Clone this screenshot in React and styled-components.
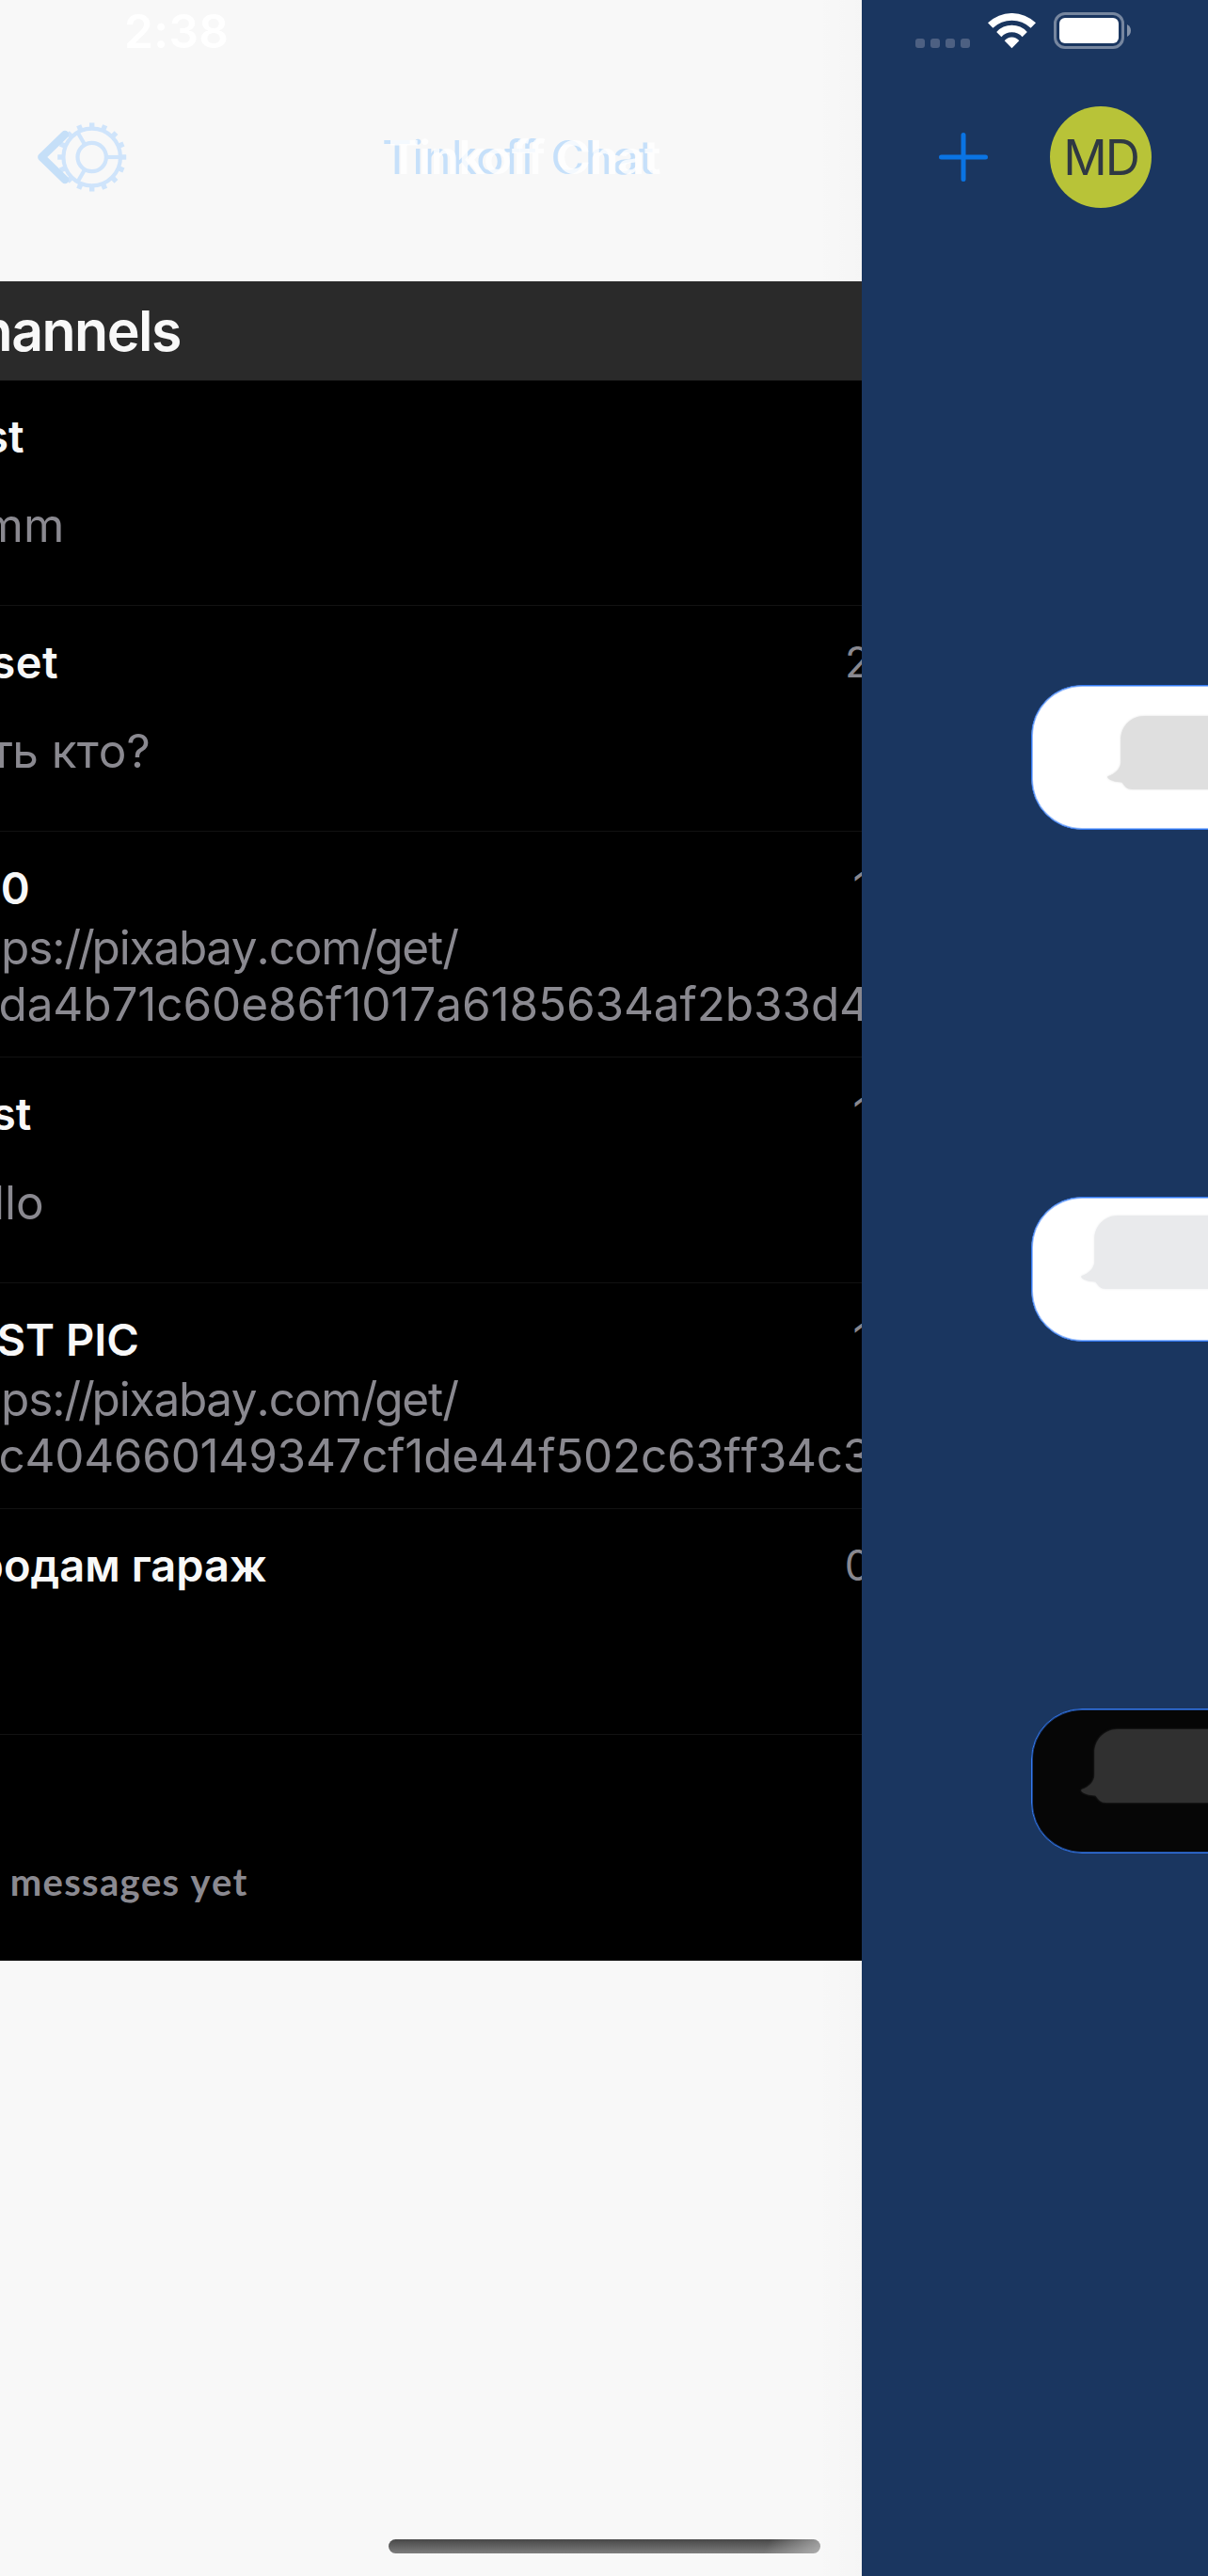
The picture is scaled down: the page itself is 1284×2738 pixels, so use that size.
import React from "react";
import styled, { createGlobalStyle } from "styled-components";

const GlobalStyle = createGlobalStyle`
  html, body { margin: 0; padding: 0; background: #1a3660; }
  * { box-sizing: border-box; }
`;

const Screen = styled.div`
  display: flex;
  width: 1284px;
  height: 2738px;
  overflow: hidden;
  background: #1a3660;
  font-family: Inter, "Liberation Sans", sans-serif;
`;

/* ---------- channels screen (sliding away) ---------- */

const ChannelsPane = styled.div`
  position: relative;
  display: flex;
  flex-direction: column;
  flex: none;
  width: 916px;
  height: 100%;
  overflow: hidden;
  background: #f8f8f8;
  white-space: nowrap;

  &::after {
    content: "";
    position: absolute;
    inset: 0 0 0 auto;
    width: 50px;
    background: linear-gradient(to right, rgba(0, 0, 0, 0), rgba(0, 0, 0, 0.012));
    pointer-events: none;
  }
`;

const Clock = styled.div`
  flex: none;
  height: 66px;
  padding-left: 132px;
  font-size: 49.5px;
  line-height: 66px;
  font-weight: 600;
  letter-spacing: 0.39px;
  color: #fff;
`;

const NavBar = styled.div`
  display: flex;
  flex: none;
  align-items: center;
  height: 202px;
  margin-bottom: 31px;
`;

const NavIcons = styled.svg`
  flex: none;
  width: 110px;
  height: 80px;
  margin-left: 30px;
`;

const TitleStack = styled.div`
  display: grid;
  margin-left: 266px;
`;

const NavTitle = styled.span`
  grid-area: 1 / 1;
  padding-left: ${(p) => p.$shift || 0}px;
  font-size: 49.5px;
  line-height: 202px;
  font-weight: ${(p) => p.$weight};
  letter-spacing: ${(p) => p.$track}px;
  color: ${(p) => p.$color};
`;

const SectionHeader = styled.div`
  flex: none;
  height: 105px;
  background: #2a2a2a;
  color: #f8f8f8;
  font-size: 59px;
  line-height: 105px;
  font-weight: 600;
  letter-spacing: -1.5px;
  text-indent: -22.5px;
`;

const List = styled.div`
  flex: none;
  background: #000;
  box-shadow: inset 0 1px 0 #121212;
`;

const Row = styled.div`
  height: 240px;
  padding-top: 30px;
  border-bottom: 1px solid #121212;
  overflow: hidden;

  &:last-child { border-bottom-color: #000; }
`;

const RowHead = styled.div`
  display: flex;
  height: 63px;
`;

const Name = styled.span`
  margin-left: ${(p) => p.$x}px;
  font-size: 47px;
  line-height: 60px;
  font-weight: 600;
  letter-spacing: ${(p) => p.$track || 0}px;
  color: #f8f8f8;
`;

const Time = styled.span`
  flex: none;
  width: ${(p) => p.$w}px;
  margin-left: auto;
  font-size: 44.5px;
  line-height: 60px;
  color: #8a8990;
`;

const Preview = styled.div`
  display: flex;
  flex-direction: column;
  justify-content: center;
  height: 120px;
`;

const Line = styled.span`
  margin-left: ${(p) => p.$x}px;
  font-size: 49.5px;
  line-height: 60px;
  letter-spacing: ${(p) => p.$track || 0}px;
  font-kerning: none;
  font-variant-ligatures: none;
  color: #8a8990;

  &:only-child { padding-top: 2px; }
`;

const Slash = styled.span`
  letter-spacing: -3.2px;
`;

const EmptyLine = styled(Line)`
  font-family: Lato, sans-serif;
  font-size: 40px;
  font-weight: 700;

  &:only-child { padding-top: 5px; }
`;

const HomeBar = styled.div`
  flex: none;
  width: 459px;
  height: 15px;
  margin: auto 0 24px 413px;
  border-radius: 8px;
  background:
    linear-gradient(115deg, rgba(190, 190, 190, 0) 87%, rgba(190, 190, 190, 0.75) 100%),
    linear-gradient(#474747, #7d7d7d);
`;

/* ---------- themes screen (underneath) ---------- */

const ThemesPane = styled.div`
  display: flex;
  flex-direction: column;
  flex: none;
  width: 368px;
  overflow: hidden;
`;

const StatusIcons = styled.div`
  display: flex;
  align-items: flex-end;
  height: 66px;
  padding: 0 0 14px 57px;
`;

const Dots = styled.div`
  display: flex;
  gap: 6px;
  margin: 0 19px 1px 0;
`;

const Dot = styled.i`
  width: 10px;
  height: 10px;
  border-radius: 3px;
  background: #4d6082;
`;

const Wifi = styled.svg`
  width: 51px;
  height: 38px;
  margin-right: 19px;
`;

const Battery = styled.svg`
  width: 84px;
  height: 39px;
`;

const Actions = styled.div`
  display: flex;
  align-items: center;
  height: 202px;
  padding-left: 82px;
  gap: 66px;
`;

const Plus = styled.svg`
  width: 52px;
  height: 52px;
`;

const Avatar = styled.div`
  display: flex;
  align-items: center;
  justify-content: center;
  width: 108px;
  height: 108px;
  border-radius: 50%;
  background: #b8c338;
  color: #2f3843;
  font-size: 51.5px;
  letter-spacing: -2px;
`;

const ThemeList = styled.div`
  display: flex;
  flex-direction: column;
  gap: 390px;
  padding: 460px 0 0 180px;
`;

const ThemeCard = styled.div`
  width: 260px;
  height: 154px;
  padding: ${(p) => p.$top}px 0 0 ${(p) => p.$left}px;
  border: 1px solid #347bf5;
  border-radius: 54px;
  background: ${(p) => p.$bg};
  box-shadow: inset 0 0 0 1px rgba(52, 123, 245, 0.5);
  overflow: hidden;
`;

const Bubble = styled.svg`
  display: block;
  width: 200px;
  height: 82px;
  overflow: visible;
  fill: ${(p) => p.$fill};
  filter: drop-shadow(0 0 1.2px ${(p) => p.$fill});
`;

const channels = [
  { name: "st", x: -16.8, lines: [{ t: "mm", x: -18.4 }] },
  { name: "set", x: -9.6, track: 0.5, time: "2", w: 18, lines: [{ t: "ть кто?", x: -9.8 }] },
  {
    name: "0", x: 0.7, time: "1", w: 9.4,
    lines: [
      { t: "ps://pixabay.com/get/", x: 1, track: -1.15 },
      { t: "da4b71c60e86f1017a6185634af2b33d4", x: -1.5, track: -0.12 },
    ],
  },
  { name: "st", x: -9, time: "1", w: 9.4, lines: [{ t: "llo", x: -7 }] },
  {
    name: "ST PIC", x: -3.5, time: "1", w: 9.4,
    lines: [
      { t: "ps://pixabay.com/get/", x: 1, track: -1.15 },
      { t: "c404660149347cf1de44f502c63ff34c3", x: -1.5, track: -0.28 },
    ],
  },
  { name: "родам гараж", x: -25.4, time: "0", w: 18.3, lines: [] },
  { name: "", x: 0, lines: [], empty: "messages yet" },
];

const themes = [
  { bg: "#ffffff", bubble: "#dfdfdf", left: 79.7, top: 31.6 },
  { bg: "#ffffff", bubble: "#e9eaec", left: 52, top: 18.5 },
  { bg: "#060606", bubble: "#303030", left: 52, top: 21 },
];

const teeth = Array.from({ length: 16 }, (_, i) => i * 22.5);

/* slashes sit closer together than the letters around them */
function tightSlashes(text) {
  return text.split(/(\/+)/).map((part, i) =>
    part.startsWith("/") ? <Slash key={i}>{part}</Slash> : part
  );
}

function BackAndSettings() {
  return (
    <NavIcons viewBox="30 126.7 110 80" fill="none">
      <g stroke="#cfe4fb" strokeWidth="4.2">
        <circle cx="97.7" cy="166.7" r="30.3" />
        <circle cx="97.7" cy="166.7" r="15.2" />
        {[0, 120, 240].map((a) => (
          <path key={a} d="M113.5 166.7H128" transform={`rotate(${a} 97.7 166.7)`} />
        ))}
        {teeth.map((a) => (
          <path key={a} d="M129 166.7H134.2" strokeWidth="5.4" transform={`rotate(${a} 97.7 166.7)`} />
        ))}
      </g>
      <path
        d="M69 142.7L44.3 166.7L69 190.7"
        stroke="#c5dff8"
        strokeWidth="8.4"
        strokeLinecap="round"
        strokeLinejoin="round"
      />
    </NavIcons>
  );
}

export default function App() {
  return (
    <Screen>
      <GlobalStyle />
      <ChannelsPane>
        <Clock>2:38</Clock>
        <NavBar>
          <BackAndSettings />
          <TitleStack>
            <NavTitle $weight={400} $track={0.2} $color="#c6e0fa">Tinkoff Chat</NavTitle>
            <NavTitle $weight={600} $track={-0.48} $color="rgba(255,255,255,0.8)" $shift={7} aria-hidden>
              Tinkoff Chat
            </NavTitle>
          </TitleStack>
        </NavBar>
        <SectionHeader>hannels</SectionHeader>
        <List>
          {channels.map((c, i) => (
            <Row key={i}>
              <RowHead>
                <Name $x={c.x} $track={c.track}>{c.name}</Name>
                {c.time && <Time $w={c.w}>{c.time}</Time>}
              </RowHead>
              <Preview>
                {c.lines.map((l) => (
                  <Line key={l.t} $x={l.x} $track={l.track}>{tightSlashes(l.t)}</Line>
                ))}
                {c.empty && <EmptyLine $x={10.7} $track={1.3}>{c.empty}</EmptyLine>}
              </Preview>
            </Row>
          ))}
        </List>
        <HomeBar />
      </ChannelsPane>

      <ThemesPane>
        <StatusIcons>
          <Dots><Dot /><Dot /><Dot /><Dot /></Dots>
          <Wifi viewBox="0 0 51 38" fill="#fff">
            <path d="M0 10.3A36.7 36.7 0 0 1 51 10.3L45.6 15.8A29 29 0 0 0 5.4 15.8Z" />
            <path d="M9.2 20A21.8 21.8 0 0 1 41.8 20L36.6 25.2A14.8 14.8 0 0 0 14.4 25.2Z" />
            <path d="M17.7 29.2A10 10 0 0 1 33.3 29.2L25.5 37.2Z" />
          </Wifi>
          <Battery viewBox="0 0 84 39">
            <rect x="1.5" y="1.5" width="72" height="36" rx="10.5" fill="none" stroke="#76869f" strokeWidth="3" />
            <rect x="6" y="6" width="63" height="27" rx="6" fill="#fff" />
            <path d="M78 13C80.8 14.2 82 16.8 82 19.5S80.8 24.8 78 26Z" fill="#8391a8" />
          </Battery>
        </StatusIcons>
        <Actions>
          <Plus viewBox="0 0 52 52">
            <path d="M26 2.5V49.5M2.5 26H49.5" stroke="#0a74e4" strokeWidth="5" strokeLinecap="round" />
          </Plus>
          <Avatar>MD</Avatar>
        </Actions>
        <ThemeList>
          {themes.map((t, i) => (
            <ThemeCard key={i} $bg={t.bg} $left={t.left} $top={t.top}>
              <Bubble viewBox="0 0 200 82" $fill={t.bubble}>
                <path d="M14.3 25C14.3 11 25 0 39.3 0H200V78H26.5C21 78 18.5 75 15.5 70.5C9 70 3.5 69 0.6 66Q-0.3 65 0.8 64C8 61.5 14.3 56 14.3 48.7Z" />
              </Bubble>
            </ThemeCard>
          ))}
        </ThemeList>
      </ThemesPane>
    </Screen>
  );
}
